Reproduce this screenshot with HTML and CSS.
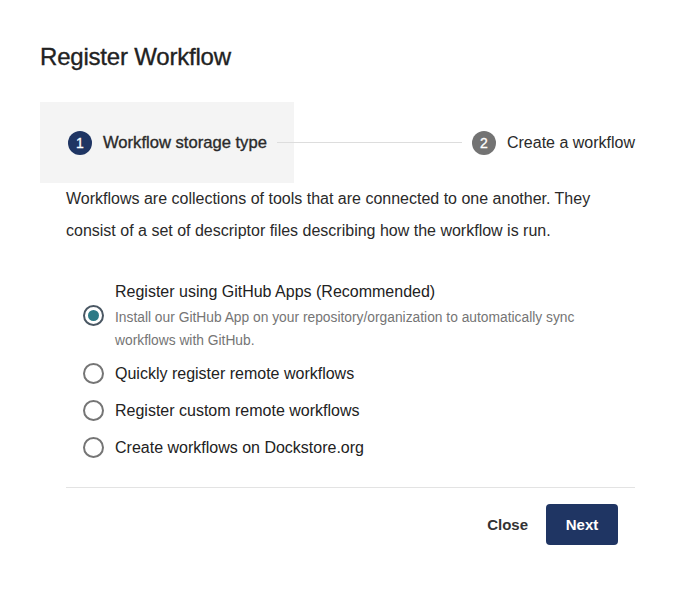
FILE: index.html
```html
<!DOCTYPE html>
<html lang="en">
<head>
<meta charset="utf-8">
<title>Register Workflow</title>
<link rel="stylesheet" href="styles.css">
</head>
<body>
<div class="dialog">
  <h2 class="title">Register Workflow</h2>
  <div class="stepper">
    <div class="step step-active">
      <span class="step-num num-active">1</span>
      <span class="step-label label-active">Workflow storage type</span>
    </div>
    <div class="step-line"></div>
    <div class="step step-next">
      <span class="step-num num-next">2</span>
      <span class="step-label">Create a workflow</span>
    </div>
  </div>
  <div class="content">
    <p class="intro">Workflows are collections of tools that are connected to one another. They consist of a set of descriptor files describing how the workflow is run.</p>
    <div class="options">
      <label class="option option-desc">
        <span class="radio radio-checked"><span class="dot"></span></span>
        <span class="option-text">
          <span class="option-label">Register using GitHub Apps (Recommended)</span>
          <span class="option-help">Install our GitHub App on your repository/organization to automatically sync workflows with GitHub.</span>
        </span>
      </label>
      <label class="option">
        <span class="radio"></span>
        <span class="option-label">Quickly register remote workflows</span>
      </label>
      <label class="option">
        <span class="radio"></span>
        <span class="option-label">Register custom remote workflows</span>
      </label>
      <label class="option">
        <span class="radio"></span>
        <span class="option-label">Create workflows on Dockstore.org</span>
      </label>
    </div>
    <div class="divider"></div>
    <div class="actions">
      <button class="btn btn-close">Close</button>
      <button class="btn btn-next">Next</button>
    </div>
  </div>
</div>
</body>
</html>
```

FILE: styles.css
```css
html, body {
  margin: 0;
  padding: 0;
  background: #ffffff;
}
body {
  font-family: "Liberation Sans", Arial, Helvetica, sans-serif;
  color: #222222;
}
.dialog {
  width: 700px;
  height: 611px;
  box-sizing: border-box;
  padding: 43px 40px 0 40px;
}
.title {
  margin: 0;
  font-size: 24px;
  line-height: 28px;
  font-weight: normal;
  color: #222222;
  -webkit-text-stroke: 0.35px #222222;
  letter-spacing: -0.2px;
}
.stepper {
  margin-top: 31px;
  height: 81px;
  display: flex;
  align-items: center;
}
.step {
  display: flex;
  align-items: center;
  height: 81px;
}
.step-active {
  background: #f4f4f4;
  padding: 0 27px 0 28px;
}
.step-next {
  padding-right: 25px;
}
.step-num {
  width: 24px;
  height: 24px;
  border-radius: 50%;
  color: #ffffff;
  font-size: 14px;
  line-height: 24px;
  text-align: center;
  margin-right: 11px;
  flex: none;
  -webkit-text-stroke: 0.3px #ffffff;
}
.num-active { background: #1f3563; }
.num-next { background: #737373; }
.step-label {
  font-size: 16px;
  line-height: 24px;
  color: #2a2a2a;
}
.label-active {
  font-size: 16.6px;
  -webkit-text-stroke: 0.35px #2a2a2a;
}
.step-line {
  flex: 1;
  height: 1px;
  background: #dddddd;
  margin: 0 10px 0 -17px;
}
.content {
  padding: 0 25px 0 26px;
}
.intro {
  margin: 0;
  font-size: 16px;
  line-height: 32px;
  color: #2a2a2a;
}
.options {
  margin-top: 25.5px;
  display: flex;
  flex-direction: column;
}
.option {
  display: flex;
  align-items: center;
  padding: 6px 0;
}
.option-desc {
  padding-bottom: 3px;
}
.radio {
  flex: none;
  width: 21px;
  height: 21px;
  box-sizing: border-box;
  border: 2px solid #757575;
  border-radius: 50%;
  margin-left: 17px;
  margin-right: 11px;
  display: flex;
  align-items: center;
  justify-content: center;
}
.radio-checked {
  border-color: #4a5763;
}
.dot {
  width: 11px;
  height: 11px;
  border-radius: 50%;
  background: #2d7a86;
}
.option-text {
  display: flex;
  flex-direction: column;
}
.option-label {
  font-size: 16px;
  line-height: 25px;
  color: #222222;
}
.option-help {
  margin-top: 2px;
  font-size: 13.8px;
  line-height: 23px;
  color: #757575;
  max-width: 480px;
}
.divider {
  margin-top: 21.5px;
  height: 1px;
  background: #e3e3e3;
}
.actions {
  margin-top: 16px;
  display: flex;
  justify-content: flex-end;
  align-items: center;
  padding-right: 17px;
}
.btn {
  font-family: "Liberation Sans", Arial, Helvetica, sans-serif;
  font-size: 15px;
  font-weight: bold;
  border: none;
  cursor: pointer;
  height: 41px;
  line-height: 41px;
  padding: 0;
}
.btn-close {
  background: transparent;
  color: #333333;
  padding: 0 9px;
  margin-right: 9px;
}
.btn-next {
  background: #1f3563;
  color: #ffffff;
  width: 72px;
  border-radius: 4px;
}
```
